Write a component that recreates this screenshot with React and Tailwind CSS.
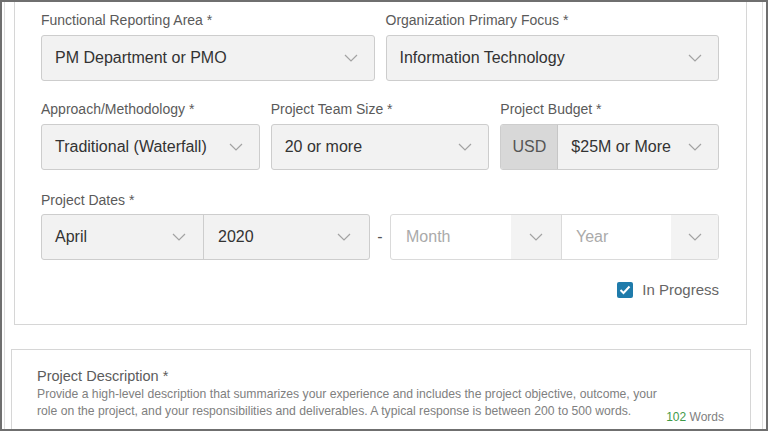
import React from "react";

const Chevron = () => (
  <svg width="14" height="8" viewBox="0 0 14 8" className="shrink-0">
    <polyline points="1,1 7,7 13,1" fill="none" stroke="#a3a3a3" strokeWidth="1.2" />
  </svg>
);

function Label({ children, className = "" }) {
  return (
    <div className={`text-[14px] leading-[16px] text-[#5a5a5a] ${className}`}>{children}</div>
  );
}

function Select({ value }) {
  return (
    <div className="flex h-[46px] items-center justify-between rounded-[3px] border border-[#cdcdcd] bg-[#f2f2f2] pl-[13px] pr-[16px] text-[16px] text-[#333]">
      <span>{value}</span>
      <Chevron />
    </div>
  );
}

export default function App() {
  return (
    <div
      className="h-[431px] w-[768px] overflow-hidden border-2 border-[#6f6f6f] bg-white"
      style={{ fontFamily: '"Liberation Sans", Arial, sans-serif' }}
    >
      <div className="ml-[2px] mr-[3px] flex h-full flex-col border-x border-[#dedede]">
        {/* Project details */}
        <div className="ml-[9px] w-[733px] border-x border-b border-[#d6d6d6] pb-[25px] pl-[26px] pr-[27px] pt-[10px]">
          <div className="grid grid-cols-2 gap-x-[11px]">
            <div>
              <Label className="mb-[7px]">Functional Reporting Area *</Label>
              <Select value="PM Department or PMO" />
            </div>
            <div>
              <Label className="mb-[7px]">Organization Primary Focus *</Label>
              <Select value="Information Technology" />
            </div>
          </div>

          <div className="mt-[20px] grid grid-cols-3 gap-x-[11px]">
            <div>
              <Label className="mb-[7px]">Approach/Methodology *</Label>
              <Select value="Traditional (Waterfall)" />
            </div>
            <div>
              <Label className="mb-[7px]">Project Team Size *</Label>
              <Select value="20 or more" />
            </div>
            <div>
              <Label className="mb-[7px]">Project Budget *</Label>
              <div className="flex h-[46px] overflow-hidden rounded-[3px] border border-[#cdcdcd] bg-[#f2f2f2] text-[16px] text-[#333]">
                <div className="flex w-[57px] items-center justify-center border-r border-[#c6c6c6] bg-[#d8d8d8] text-[#555]">
                  USD
                </div>
                <div className="flex flex-1 items-center justify-between pl-[13px] pr-[16px]">
                  <span>$25M or More</span>
                  <Chevron />
                </div>
              </div>
            </div>
          </div>

          <Label className="mb-[6px] mt-[22px]">Project Dates *</Label>
          <div className="flex items-center">
            <div className="flex h-[46px] w-[329px] rounded-[3px] border border-[#cdcdcd] bg-[#f2f2f2] text-[16px] text-[#333]">
              <div className="flex w-[162px] items-center justify-between border-r border-[#cdcdcd] pl-[13px] pr-[17px]">
                <span>April</span>
                <Chevron />
              </div>
              <div className="flex flex-1 items-center justify-between pl-[14px] pr-[18px]">
                <span>2020</span>
                <Chevron />
              </div>
            </div>
            <div className="flex w-[20px] justify-center text-[16px] text-[#555]">-</div>
            <div className="flex h-[46px] w-[329px] overflow-hidden rounded-[3px] border border-[#dadada] bg-white text-[16px] text-[#aaa]">
              <div className="flex w-[171px] border-r border-[#dadada]">
                <div className="flex flex-1 items-center pl-[15px]">Month</div>
                <div className="flex w-[50px] items-center justify-center bg-[#f3f3f3]">
                  <Chevron />
                </div>
              </div>
              <div className="flex flex-1">
                <div className="flex flex-1 items-center pl-[14px]">Year</div>
                <div className="flex w-[47px] items-center justify-center bg-[#f3f3f3]">
                  <Chevron />
                </div>
              </div>
            </div>
          </div>

          <div className="mt-[21px] flex items-center justify-end gap-[9px]">
            <div className="flex h-[16px] w-[16px] items-center justify-center rounded-[2px] bg-[#1f7bab]">
              <svg width="12" height="10" viewBox="0 0 12 10">
                <polyline points="1.5,5 4.5,8 10.5,1.5" fill="none" stroke="white" strokeWidth="2" />
              </svg>
            </div>
            <span className="text-[15px] leading-[18px] text-[#666]">In Progress</span>
          </div>
        </div>

        {/* Project description */}
        <div className="ml-[6px] mt-[24px] w-[740px] flex-1 border-x border-t border-[#d6d6d6] pl-[25px] pr-[26px] pt-[17px]">
          <div className="text-[14.5px] leading-[18px] text-[#5c5c5c]">Project Description *</div>
          <div className="mt-[1px] flex items-end justify-between">
            <p className="pb-[6px] text-[12.2px] leading-[17px] text-[#808080]">
              Provide a high-level description that summarizes your experience and includes the project objective, outcome, your
              <br />
              role on the project, and your responsibilities and deliverables. A typical response is between 200 to 500 words.
            </p>
            <span className="text-[12px] leading-[17px] text-[#808080]">
              <span className="text-[#3f9a48]">102</span> Words
            </span>
          </div>
        </div>
      </div>
    </div>
  );
}
